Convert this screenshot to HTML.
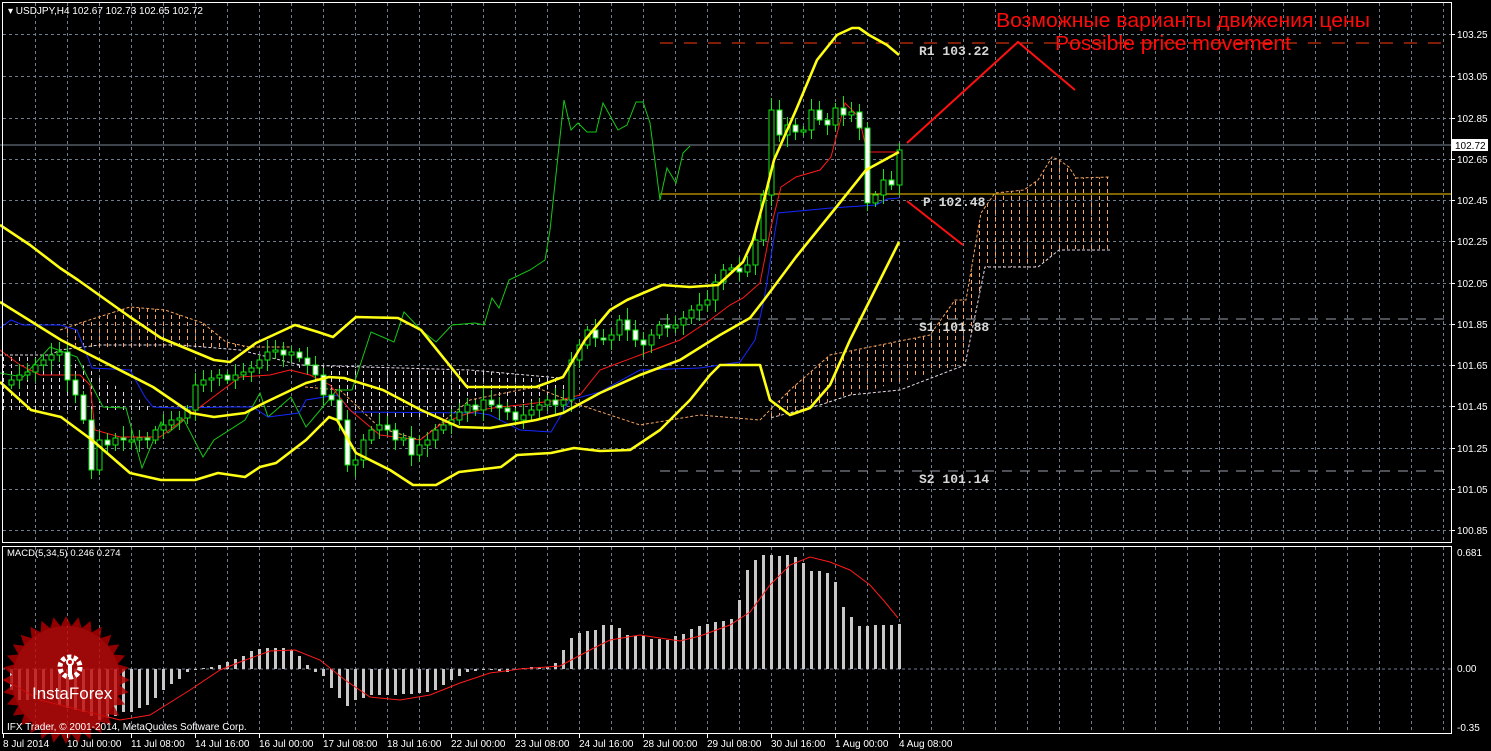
<!DOCTYPE html>
<html><head><meta charset="utf-8"><style>
html,body{margin:0;padding:0;background:#000;width:1491px;height:751px;overflow:hidden}
svg{display:block}
text{font-family:"Liberation Sans",sans-serif}
text.mono{font-family:"Liberation Mono",monospace !important;font-weight:bold}
</style></head><body>
<svg id="s" width="1491" height="751" xmlns="http://www.w3.org/2000/svg">
<defs>
<pattern id="po" width="8" height="7" patternUnits="userSpaceOnUse"><line x1="3.5" y1="0" x2="3.5" y2="4" stroke="#f4a460" stroke-width="1"/></pattern>
<pattern id="pw" width="8" height="7" patternUnits="userSpaceOnUse"><line x1="3.5" y1="0" x2="3.5" y2="4" stroke="#e6d8e6" stroke-width="1"/></pattern>
</defs>
<rect width="1491" height="751" fill="#000"/>
<g id="grid" stroke="#6f7e8f" stroke-width="1" stroke-dasharray="3,3"></g>
<polygon fill="url(#po)" points="966,300 981,213 995,193 1024,190 1038,180 1052,157 1059,160 1069,167 1076,178 1110,177 1110,250 1059,250 1038,267 985,267 965,365 940,370 900,382 850,395 820,405 770,418 760,420 790,390 830,355 880,345 930,335 955,300"/>
<polyline fill="none" stroke="#f4a460" stroke-dasharray="3,2" points="760,420 790,390 830,355 880,345 930,335 955,300 966,300 981,213 995,193 1024,190 1038,180 1052,157 1059,160 1069,167 1076,178 1110,177"/>
<polyline fill="none" stroke="#e6d8e6" stroke-dasharray="3,2" points="1110,250 1059,250 1038,267 985,267 965,365 900,390 850,395 820,405 770,418"/>
<polygon fill="url(#po)" points="60,330 80,323 130,307 165,310 203,323 226,342 249,347 291,347 291,350 80,350"/>
<polyline fill="none" stroke="#f4a460" stroke-dasharray="3,2" points="60,330 80,323 130,307 165,310 203,323 226,342 249,347 291,347"/>
<polygon fill="url(#pw)" points="0,355 50,355 60,350 90,370 130,395 150,405 150,410 0,410"/>
<polygon fill="url(#pw)" points="295,365 400,368 470,370 560,378 575,395 560,405 520,410 470,415 430,418 380,420 330,400"/>
<polyline fill="none" stroke="#e6d8e6" stroke-dasharray="3,2" points="0,355 50,355 60,350 100,345 180,345 240,350 300,365 400,368 470,370 560,378"/>
<polyline fill="none" stroke="#f4a460" stroke-dasharray="3,2" points="305,387 340,390 380,428 420,440 470,400 535,387 580,405 640,425 700,415 760,420"/>
<line x1="0" y1="145" x2="1451" y2="145" stroke="#7a8899"/>
<line x1="660" y1="43" x2="1450" y2="43" stroke="#ff3a10" stroke-dasharray="13,11"/>
<line x1="660" y1="194" x2="1451" y2="194" stroke="#ffc800"/>
<line x1="660" y1="319" x2="1450" y2="319" stroke="#9aa0a8" stroke-dasharray="10,8"/>
<line x1="660" y1="471" x2="1450" y2="471" stroke="#9aa0a8" stroke-dasharray="10,8"/>
<polyline fill="none" stroke="#14c814" stroke-width="1" points="0,373 23,377 50,347 77,357 103,407 126,408 142,468 161,422 168,433 184,420 203,457 214,440 245,420 260,393 268,417 291,397 306,427 337,390 352,390 371,332 394,342 404,312 421,330 436,342 452,325 475,323 484,325 492,298 499,308 509,280 530,270 545,260 550,230 564,100 571,130 578,123 587,132 596,132 603,103 618,130 627,125 636,102 643,102 650,123 660,200 667,168 676,183 683,153 690,146"/>
<polyline fill="none" stroke="#1428ff" stroke-width="1" points="0,328 11,320 23,325 61,325 77,330 92,368 130,370 145,397 153,407 176,408 230,407 253,407 268,417 299,413 306,400 337,395 352,412 478,413 490,415 520,430 551,432 570,400 600,392 640,370 700,368 740,362 755,340 764,300 778,213 831,208 876,205 887,199 899,198"/>
<polyline fill="none" stroke="#ff1a1a" stroke-width="1" points="0,350 20,365 40,375 80,375 90,385 95,430 120,437 160,437 240,377 270,375 290,370 310,375 330,385 350,410 380,435 420,440 440,425 460,416 480,410 500,407 520,405 560,400 580,395 600,370 640,355 680,340 710,320 730,305 743,298 760,283 771,227 781,187 796,177 820,170 831,157 845,103 859,117 867,152 899,152"/>
<g id="candles"></g>
<g fill="none" stroke="#ffff14" stroke-width="2.6" stroke-linejoin="round">
<polyline points="0,225 30,245 60,268 78,280 130,317 161,338 214,360 230,362 256,343 295,325 318,332 333,337 356,317 398,318 421,330 467,387 536,387 563,377 585,340 610,310 627,300 662,285 690,287 718,285 743,262 753,240 764,200 774,160 796,110 817,60 837,35 852,28 859,28 869,35 887,45 899,55"/>
<polyline points="0,302 61,340 153,387 191,413 214,417 245,413 264,403 306,383 329,377 344,378 383,390 421,410 459,427 490,428 536,420 563,413 600,393 640,375 680,360 720,335 750,318 764,300 796,257 834,210 866,170 899,152"/>
<polyline points="0,382 31,410 61,417 92,440 130,473 161,480 195,480 218,473 245,477 260,467 276,463 306,440 329,417 337,420 356,453 390,470 413,485 436,485 459,472 501,467 517,455 551,453 574,448 600,451 630,450 660,430 690,400 710,375 720,365 760,365 770,400 790,415 810,408 830,385 850,340 870,300 885,270 899,242"/>
</g>
<polyline fill="none" stroke="#ff1010" stroke-width="2" points="907,143 1018,42 1075,90"/>
<line x1="907" y1="201" x2="963" y2="245" stroke="#ff1010" stroke-width="2"/>
<g font-size="13" fill="#d8d8d8">
<text class="mono" x="919" y="55">R1 103.22</text>
<text class="mono" x="923" y="206">P 102.48</text>
<text class="mono" x="919" y="331">S1 101.88</text>
<text class="mono" x="919" y="483">S2 101.14</text>
</g>
<text x="996" y="27" font-size="20" fill="#ff0a0a" textLength="374" lengthAdjust="spacingAndGlyphs">Возможные варианты движения цены</text>
<text x="1055" y="50" font-size="20" fill="#ff0a0a" textLength="236" lengthAdjust="spacingAndGlyphs">Possible price movement</text>
<line x1="2" y1="669" x2="1451" y2="669" stroke="#6f7e8f" stroke-dasharray="3,3"/>
<g id="macd" fill="#c8c8c8"></g>
<polyline fill="none" stroke="#ff1a1a" stroke-width="1" points="5,680 40,700 80,710 120,720 150,715 190,690 220,670 240,662 270,651 295,650 320,660 345,680 370,697 400,700 430,695 460,683 490,673 520,669 560,666 590,650 610,640 640,635 680,641 700,636 730,625 750,612 770,585 790,565 810,557 830,562 850,570 870,585 885,602 898,618"/>
<g opacity="0.82">
<polygon id="star" fill="#b00000"/>
<circle cx="66" cy="680" r="54" fill="#c00a0a"/>
</g>
<g fill="#fff" transform="translate(70,667)">
<circle cx="0" cy="0" r="10" fill="none" stroke="#fff" stroke-width="5" stroke-dasharray="4,2.3"/>
<rect x="-2" y="-4" width="4" height="14"/>
<circle cx="0" cy="-5" r="3" fill="#c00a0a" stroke="#fff" stroke-width="2"/>
</g>
<text x="32" y="699" font-size="17" fill="#fff">InstaForex</text>
<text x="7" y="730" font-size="10" fill="#fff">IFX Trader, © 2001-2014, MetaQuotes Software Corp.</text>
<text x="7" y="556" font-size="9.5" fill="#fff">MACD(5,34,5) 0.246 0.274</text>
<g fill="none" stroke="#fff" stroke-width="1">
<path d="M2.5,2.5 H1451.5 V542.5 H2.5 Z"/>
<path d="M2.5,546.5 H1451.5 V733.5 H2.5 Z"/>
</g>
<text x="8" y="14" font-size="10" fill="#fff">▾ USDJPY,H4  102.67 102.73 102.65 102.72</text>
<g id="axis" font-size="10" fill="#fff"></g>
<rect x="1452" y="139" width="36" height="12" fill="#fff"/>
<text x="1455" y="149" font-size="10" fill="#000">102.72</text>
</svg>
<script>
(function(){
var NS="http://www.w3.org/2000/svg";
function el(p,t,a){var e=document.createElementNS(NS,t);for(var k in a)e.setAttribute(k,a[k]);p.appendChild(e);return e;}
var g=document.getElementById('grid');
for(var x=35;x<1451;x+=32){el(g,'line',{x1:x+.5,y1:3,x2:x+.5,y2:542});el(g,'line',{x1:x+.5,y1:547,x2:x+.5,y2:733});}
var ys=[34,76,118,159,200,241,283,324,365,406,448,489,530];
var lb=["103.25","103.05","102.85","102.65","102.45","102.25","102.05","101.85","101.65","101.45","101.25","101.05","100.85"];
var ax=document.getElementById('axis');
ys.forEach(function(y,i){el(g,'line',{x1:3,y1:y+.5,x2:1451,y2:y+.5});el(ax,'line',{x1:1451,y1:y+.5,x2:1455,y2:y+.5,stroke:'#fff'});var t=el(ax,'text',{x:1457,y:y+4});t.textContent=lb[i];});
[["0.681",556],["0.00",672],["-0.35",731]].forEach(function(a){var t=el(ax,'text',{x:1457,y:a[1]});t.textContent=a[0];});
var dl=["8 Jul 2014","10 Jul 00:00","11 Jul 08:00","14 Jul 16:00","16 Jul 00:00","17 Jul 08:00","18 Jul 16:00","22 Jul 00:00","23 Jul 08:00","24 Jul 16:00","28 Jul 00:00","29 Jul 08:00","30 Jul 16:00","1 Aug 00:00","4 Aug 08:00"];
dl.forEach(function(s,i){var x=i==0?3:3+64*i;el(ax,'line',{x1:x+.5,y1:734,x2:x+.5,y2:738,stroke:'#fff'});var t=el(ax,'text',{x:x,y:747});t.textContent=s;});
var c=[380,375,372,365,360,355,352,380,395,420,470,440,445,438,440,440,438,440,430,425,420,418,410,385,380,378,375,380,375,372,368,360,352,350,355,352,358,365,375,395,400,420,465,460,440,430,425,430,440,438,455,445,440,430,425,420,412,405,410,400,405,408,412,420,415,410,405,400,405,400,360,345,330,338,340,335,320,330,340,345,335,325,328,325,318,310,305,300,282,270,268,272,265,240,195,110,135,125,132,130,110,120,125,108,115,112,128,203,195,180,185,150];
var cg=document.getElementById('candles');var prev=385;var off=112-c.length;
for(var i=0;i<c.length;i++){var cx=11+8*(i+off);var o=prev,cl=c[i];var tp=Math.min(o,cl),bt=Math.max(o,cl);if(bt-tp<2){bt=tp+2;}
el(cg,'line',{x1:cx+.5,y1:tp-4-(i*7%9),x2:cx+.5,y2:bt+4+(i*5%9),stroke:'#14e614'});
el(cg,'rect',{x:cx-2,y:tp,width:5,height:bt-tp,fill:(cl>o?'#fff':'#000'),stroke:'#14e614','stroke-width':1});prev=cl;}
var m=[690,700,700,695,698,700,705,708,710,712,716,720,718,716,712,712,708,705,698,690,684,679,672,670,668,667,665,662,659,656,651,649,648,648,648,650,656,665,672,676,688,698,706,700,698,695,695,695,695,694,694,693,692,690,685,680,676,672,671,670,670,671,672,670,668,667,667,667,663,650,638,633,631,630,625,625,628,635,636,636,639,639,640,636,634,629,626,624,622,621,619,600,570,560,555,555,556,555,557,563,571,571,573,582,607,617,626,626,625,625,625,624];
var mg=document.getElementById('macd');var mo=112-m.length;
for(var j=0;j<m.length;j++){var mx=11+8*(j+mo)-1;var my=m[j];el(mg,'rect',{x:mx,y:Math.min(my,669),width:3,height:Math.max(1,Math.abs(my-669))});}
var pts=[];for(var k=0;k<64;k++){var a=k*Math.PI/32;var r=k%2?54:64;pts.push((66+r*Math.sin(a)).toFixed(1)+','+(680-r*Math.cos(a)).toFixed(1));}
document.getElementById('star').setAttribute('points',pts.join(' '));
})();
</script>
</body></html>
